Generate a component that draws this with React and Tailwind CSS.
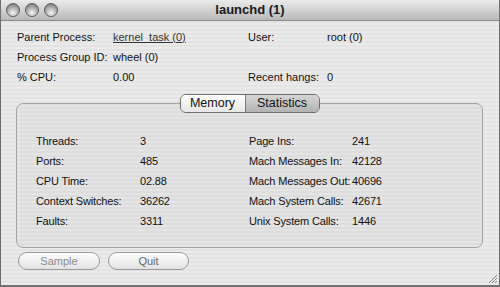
export default function App() {
    const info = [
        ["Parent Process:", "kernel_task (0)", "User:", "root (0)"],
        ["Process Group ID:", "wheel (0)", "", ""],
        ["% CPU:", "0.00", "Recent hangs:", "0"],
    ];

    const stats = [
        ["Threads:", "3", "Page Ins:", "241"],
        ["Ports:", "485", "Mach Messages In:", "42128"],
        ["CPU Time:", "02.88", "Mach Messages Out:", "40696"],
        ["Context Switches:", "36262", "Mach System Calls:", "42671"],
        ["Faults:", "3311", "Unix System Calls:", "1446"],
    ];

    return (
        <div className="w-[500px] h-[287px] flex flex-col overflow-hidden border-x border-b-2 border-[#6f6f6f] bg-[repeating-linear-gradient(0deg,#ebebeb_0px,#ebebeb_2px,#e3e3e3_2px,#e3e3e3_4px)] font-['Liberation_Sans',Arial,sans-serif] text-[11px] text-[#111]">

            {/* TITLE BAR */}
            <div className="relative h-[21px] shrink-0 flex items-center justify-center bg-gradient-to-b from-[#ebebeb] to-[#b9b9b9] border-b border-[#8d8d8d]">
                <div className="absolute left-[5px] top-[3px] flex gap-[5px]">
                    {[0, 1, 2].map((i) => (
                        <div
                            key={i}
                            className="w-[14px] h-[14px] rounded-full border border-[#5c5c5c] bg-[radial-gradient(circle_at_50%_75%,#f4f4f4_0%,#a9a9a9_55%,#6a6a6a_100%)]"
                        ></div>
                    ))}
                </div>
                <span className="text-[13px] font-bold text-[#1a1a1a]">launchd (1)</span>
            </div>

            {/* INFO */}
            <div className="pt-[6px] pl-[16px] grid grid-cols-[96px_135px_79px_1fr] whitespace-nowrap">
                {info.map((row, r) =>
                    row.map((cell, c) => (
                        <div key={r + "-" + c} className="h-[20px] flex items-center">
                            <span className={r === 0 && c === 1 ? "underline text-[#333]" : ""}>
                                {cell}
                            </span>
                        </div>
                    ))
                )}
            </div>

            {/* TAB BOX */}
            <div className="mt-[16px] ml-[15px] mr-[16px] h-[145px] shrink-0 rounded-[7px] border border-[#a3a3a3] bg-[repeating-linear-gradient(0deg,#e4e4e4_0px,#e4e4e4_2px,#dddddd_2px,#dddddd_4px)] flex flex-col">
                <div className="-mt-[10px] flex justify-center">
                    <div className="flex h-[19px] rounded-[6px] border border-[#6e6e6e] overflow-hidden text-[12.5px]">
                        <div className="w-[65px] flex items-center justify-center bg-gradient-to-b from-[#ffffff] to-[#e6e6e6] border-r border-[#7a7a7a]">
                            Memory
                        </div>
                        <div className="w-[73px] flex items-center justify-center bg-gradient-to-b from-[#d6d6d6] to-[#b3b3b3]">
                            Statistics
                        </div>
                    </div>
                </div>

                <div className="mt-[18px] pl-[19px] grid grid-cols-[104px_109px_103px_1fr] whitespace-nowrap tracking-[-0.15px]">
                    {stats.map((row, r) =>
                        row.map((cell, c) => (
                            <div key={r + "-" + c} className="h-[20px] flex items-center">
                                {cell}
                            </div>
                        ))
                    )}
                </div>
            </div>

            {/* BUTTONS */}
            <div className="mt-[4px] pl-[17px] flex gap-[8px]">
                <button className="w-[82px] h-[18px] rounded-full border border-[#9a9a9a] bg-gradient-to-b from-[#ffffff] to-[#e2e2e2] text-[11px] text-[#8a8a8a]">
                    Sample
                </button>
                <button className="w-[81px] h-[18px] rounded-full border border-[#9a9a9a] bg-gradient-to-b from-[#ffffff] to-[#e2e2e2] text-[11px] text-[#666]">
                    Quit
                </button>
            </div>

            <div className="flex-1 flex items-end justify-end">
                <svg width="12" height="12" viewBox="0 0 12 12" className="mb-[1px] mr-[1px]">
                    <path d="M11 3 L3 11 M11 6 L6 11 M11 9 L9 11" stroke="#8a8a8a" strokeWidth="1" />
                </svg>
            </div>
        </div>
    );
}
